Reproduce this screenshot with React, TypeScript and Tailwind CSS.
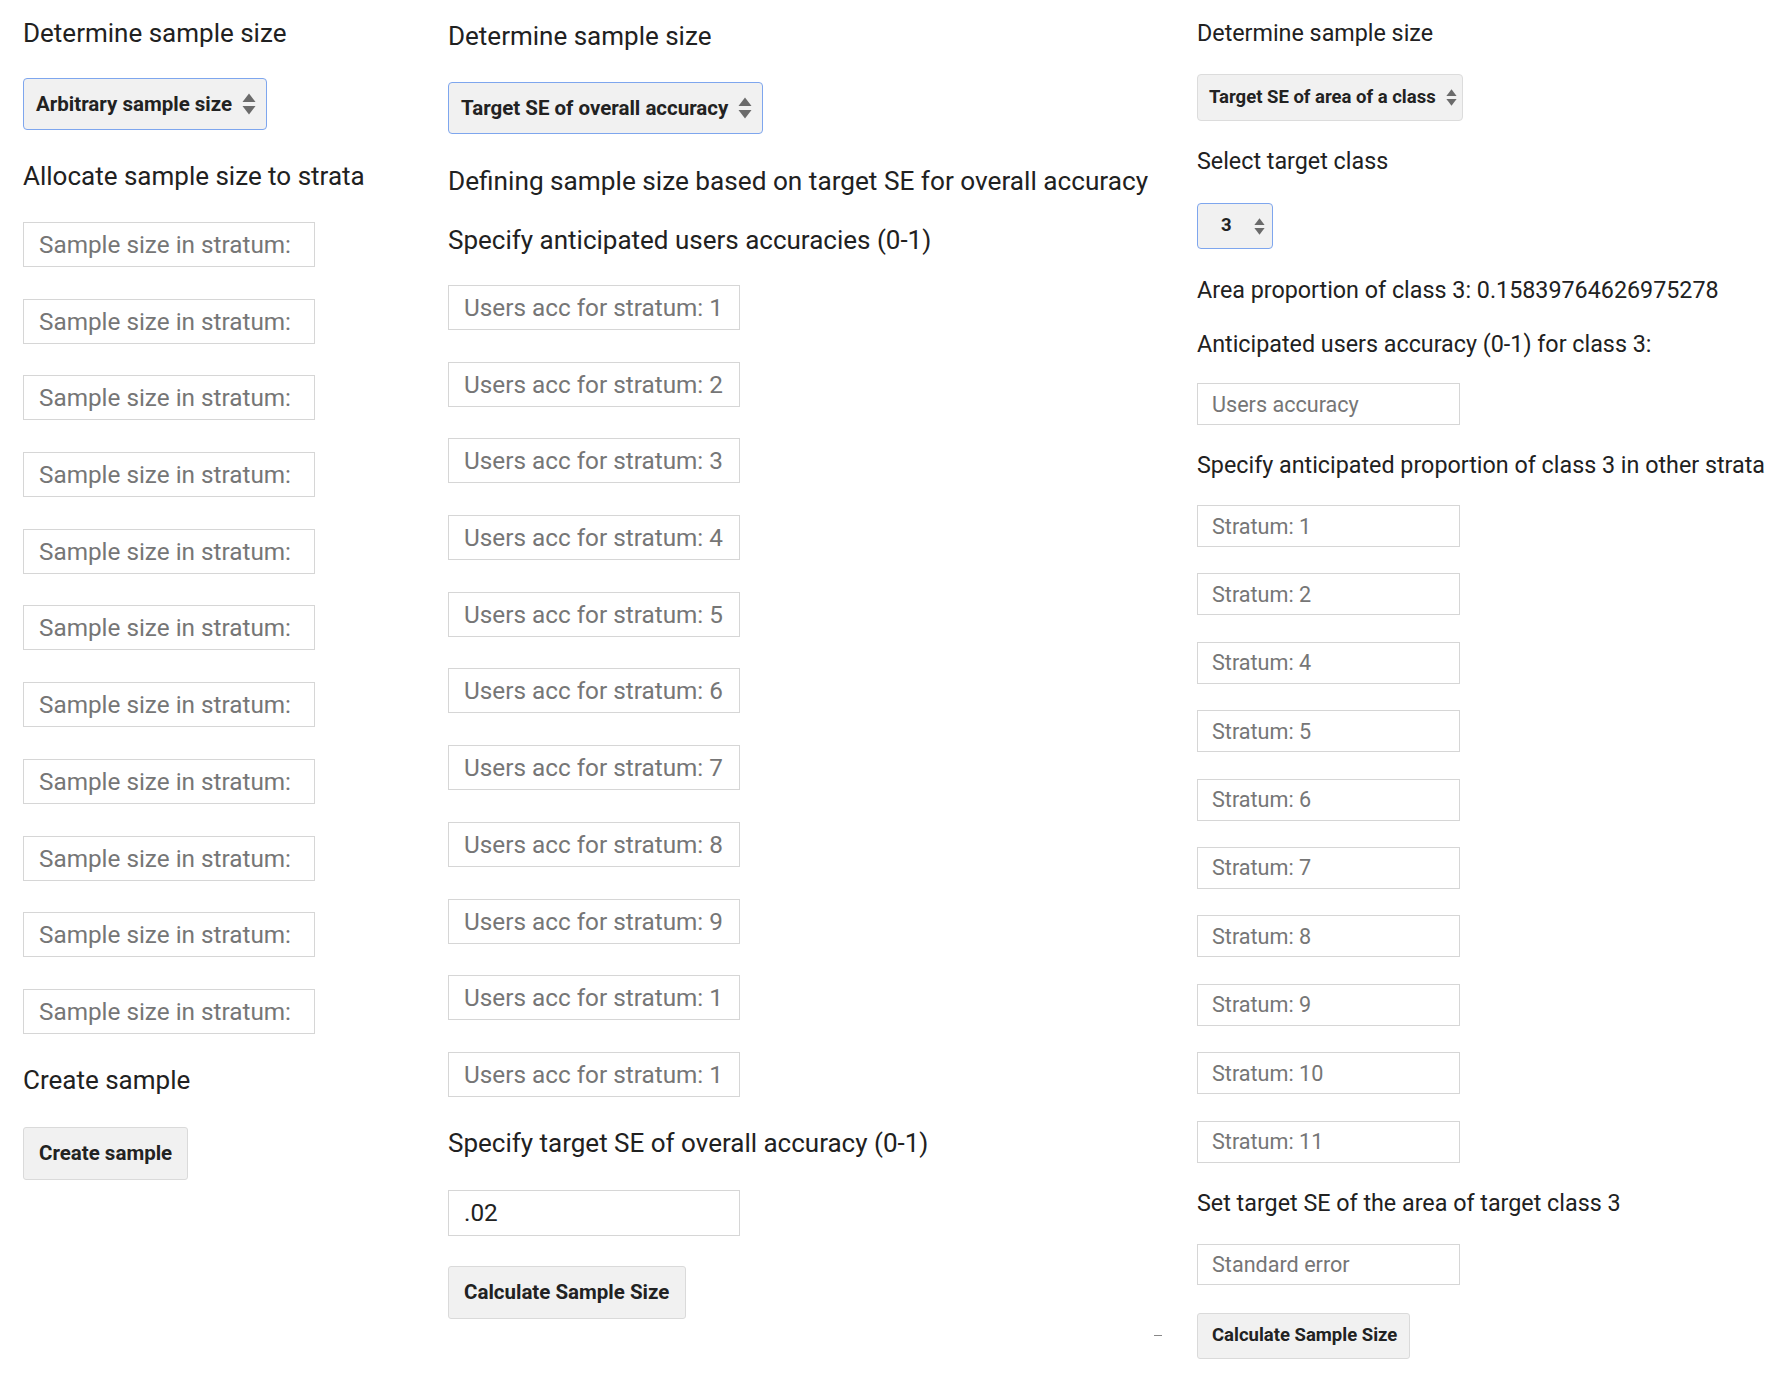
import React from "react";

function Arrows({ className }: { className: string }) {
  return (
    <svg viewBox="0 0 14 22" className={className} fill="#6b6b6b">
      <path d="M7 0.5 L13.5 9 H0.5 Z" />
      <path d="M0.5 13 H13.5 L7 21.5 Z" />
    </svg>
  );
}

function FakeSelect({
  label,
  className,
  textClass,
  arrowClass,
}: {
  label: string;
  className: string;
  textClass: string;
  arrowClass: string;
}) {
  return (
    <div className={"flex items-center bg-[#f1f1f1] rounded-[4px] " + className}>
      <span className={"font-bold text-[#222] whitespace-nowrap " + textClass}>{label}</span>
      <Arrows className={arrowClass} />
    </div>
  );
}

function Field({ placeholder, value, className }: { placeholder?: string; value?: string; className: string }) {
  return (
    <input
      readOnly
      placeholder={placeholder}
      value={value ?? ""}
      className={
        "block bg-white border border-[#d6d6d6] text-[#222] placeholder:text-[#767676] outline-none " + className
      }
    />
  );
}

function GrayButton({ label, className }: { label: string; className: string }) {
  return (
    <button className={"block bg-[#f1f1f1] border border-[#dadada] rounded-[3px] font-bold text-[#222] text-left " + className}>
      {label}
    </button>
  );
}

const col1Strata = Array.from({ length: 11 });
const col2Strata = ["1", "2", "3", "4", "5", "6", "7", "8", "9", "1", "1"];
const col3Strata = ["1", "2", "4", "5", "6", "7", "8", "9", "10", "11"];

export default function App() {
  return (
    <div className="w-[1782px] h-[1382px] bg-white text-[#212121] font-['Roboto',sans-serif] flex overflow-hidden">
      {/* Arbitrary sample size */}
      <div className="w-[448px] pl-[23px] pt-[18px] flex flex-col">
        <div className="h-[30px] leading-[30px] text-[26px]">Determine sample size</div>
        <FakeSelect
          label="Arbitrary sample size"
          className="mt-[30px] w-[244px] h-[52px] pl-[12px] border border-[#7ea6ee]"
          textClass="text-[20.5px]"
          arrowClass="ml-[10px] w-[14px] h-[22px]"
        />
        <div className="mt-[31px] h-[30px] leading-[30px] text-[26px]">Allocate sample size to strata</div>
        <div className="mt-[31px] flex flex-col gap-[31.7px]">
          {col1Strata.map((_, i) => (
            <Field key={i} placeholder="Sample size in stratum:" className="w-[292px] h-[45px] pl-[15px] text-[24.3px]" />
          ))}
        </div>
        <div className="mt-[31px] h-[30px] leading-[30px] text-[26px]">Create sample</div>
        <GrayButton label="Create sample" className="mt-[32px] w-[165px] h-[53px] pl-[15px] text-[20.5px]" />
      </div>

      {/* Target SE of overall accuracy */}
      <div className="w-[749px] pt-[21px] flex flex-col">
        <div className="h-[30px] leading-[30px] text-[26px]">Determine sample size</div>
        <FakeSelect
          label="Target SE of overall accuracy"
          className="mt-[31px] w-[315px] h-[52px] pl-[12px] border border-[#7ea6ee]"
          textClass="text-[20.5px]"
          arrowClass="ml-[10px] w-[14px] h-[22px]"
        />
        <div className="mt-[32px] h-[30px] leading-[30px] text-[26.2px] whitespace-nowrap">
          Defining sample size based on target SE for overall accuracy
        </div>
        <div className="mt-[29px] h-[30px] leading-[30px] text-[26px]">Specify anticipated users accuracies (0-1)</div>
        <div className="mt-[30px] flex flex-col gap-[31.7px]">
          {col2Strata.map((n, i) => (
            <Field key={i} placeholder={"Users acc for stratum: " + n} className="w-[292px] h-[45px] pl-[15px] text-[24.3px]" />
          ))}
        </div>
        <div className="mt-[31px] h-[30px] leading-[30px] text-[26px]">Specify target SE of overall accuracy (0-1)</div>
        <Field value=".02" className="mt-[32px] w-[292px] h-[46px] pl-[15px] text-[24.3px]" />
        <GrayButton label="Calculate Sample Size" className="mt-[30px] w-[238px] h-[53px] pl-[15px] text-[20.5px]" />
      </div>

      {/* Target SE of area of a class */}
      <div className="flex-1 pt-[19px] flex flex-col">
        <div className="h-[28px] leading-[28px] text-[23.3px]">Determine sample size</div>
        <FakeSelect
          label="Target SE of area of a class"
          className="mt-[27px] w-[266px] h-[47px] pl-[11px] border border-[#dcdcdc]"
          textClass="text-[18.5px]"
          arrowClass="ml-[10px] w-[11px] h-[19px]"
        />
        <div className="mt-[26px] h-[28px] leading-[28px] text-[23.3px]">Select target class</div>
        <FakeSelect
          label="3"
          className="mt-[28px] w-[76px] h-[46px] pl-[23px] border border-[#7ea6ee]"
          textClass="text-[18.5px]"
          arrowClass="ml-[22px] w-[11px] h-[19px]"
        />
        <div className="mt-[27px] h-[28px] leading-[28px] text-[23.3px] whitespace-nowrap">
          Area proportion of class 3: 0.15839764626975278
        </div>
        <div className="mt-[26px] h-[28px] leading-[28px] text-[23.3px] whitespace-nowrap">
          Anticipated users accuracy (0-1) for class 3:
        </div>
        <Field placeholder="Users accuracy" className="mt-[25px] w-[263px] h-[42px] pl-[14px] text-[21.6px]" />
        <div className="mt-[26px] h-[28px] leading-[28px] text-[23.3px] whitespace-nowrap">
          Specify anticipated proportion of class 3 in other strata
        </div>
        <div className="mt-[26px] flex flex-col gap-[26.4px]">
          {col3Strata.map((n) => (
            <Field key={n} placeholder={"Stratum: " + n} className="w-[263px] h-[42px] pl-[14px] text-[21.6px]" />
          ))}
        </div>
        <div className="mt-[26px] h-[28px] leading-[28px] text-[23.3px]">Set target SE of the area of target class 3</div>
        <Field placeholder="Standard error" className="mt-[27px] w-[263px] h-[41px] pl-[14px] text-[21.6px]" />
        <div className="mt-[28px] flex items-center -ml-[43px]">
          <span className="w-[8px] h-px bg-[#888] mr-[35px]" />
          <GrayButton label="Calculate Sample Size" className="w-[213px] h-[46px] pl-[14px] text-[18.5px]" />
        </div>
      </div>
    </div>
  );
}
